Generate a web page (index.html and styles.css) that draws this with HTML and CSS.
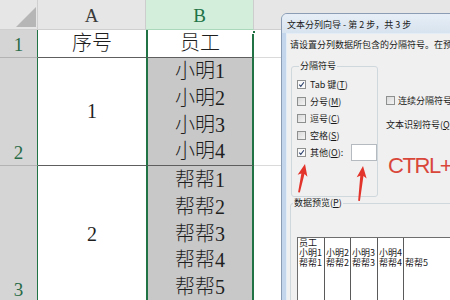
FILE: index.html
```html
<!DOCTYPE html>
<html>
<head>
<meta charset="utf-8">
<link rel="stylesheet" href="styles.css">
</head>
<body>
<div class="sheet">
  <div class="corner"><span class="tri"></span></div>
  <div class="ch">A</div>
  <div class="ch sel">B</div>
  <div class="ch rest"></div>

  <div class="rh">1</div>
  <div class="cell a">序号</div>
  <div class="cell b">员工</div>
  <div class="cell rest"></div>

  <div class="rh">2</div>
  <div class="cell a">1</div>
  <div class="cell b gray"><span>小明1</span><span>小明2</span><span>小明3</span><span>小明4</span></div>
  <div class="cell rest"></div>

  <div class="rh">3</div>
  <div class="cell a">2</div>
  <div class="cell b gray"><span>帮帮1</span><span>帮帮2</span><span>帮帮3</span><span>帮帮4</span><span>帮帮5</span></div>
  <div class="cell rest"></div>
</div>
<span class="handle"></span>

<div class="dlg">
  <div class="title">文本分列向导 - 第 2 步，共 3 步</div>
  <div class="body">
    <p class="intro">请设置分列数据所包含的分隔符号。在预览窗口内可看到分列的效果。</p>
    <div class="opts">
      <fieldset class="grp sep">
        <legend>分隔符号</legend>
        <label class="opt"><span class="cb on"><svg viewBox="0 0 9 9"><path d="M1.6 4.6 L3.6 6.8 L7.6 1.6" fill="none" stroke="#2b3f6b" stroke-width="1.4"/></svg></span>Tab 键(<u>T</u>)</label>
        <label class="opt"><span class="cb"></span>分号(<u>M</u>)</label>
        <label class="opt"><span class="cb"></span>逗号(<u>C</u>)</label>
        <label class="opt"><span class="cb"></span>空格(<u>S</u>)</label>
        <label class="opt"><span class="cb on"><svg viewBox="0 0 9 9"><path d="M1.6 4.6 L3.6 6.8 L7.6 1.6" fill="none" stroke="#2b3f6b" stroke-width="1.4"/></svg></span><span class="olab">其他(<u>O</u>):</span><span class="inp"></span></label>
      </fieldset>
      <div class="side">
        <label class="opt sm"><span class="cb"></span>连续分隔符号视为单个处理(<u>R</u>)</label>
        <div class="qual">文本识别符号(<u>Q</u>):</div>
        <div class="ctrl">CTRL+J</div>
      </div>
    </div>
    <fieldset class="grp prev">
      <legend>数据预览(<u>P</u>)</legend>
      <div class="table">
        <div class="col w1"><span>员工</span><span>小明1</span><span>帮帮1</span></div>
        <div class="col w2"><span></span><span>小明2</span><span>帮帮2</span></div>
        <div class="col w1"><span></span><span>小明3</span><span>帮帮3</span></div>
        <div class="col w2"><span></span><span>小明4</span><span>帮帮4</span></div>
        <div class="col last"><span></span><span></span><span>帮帮5</span></div>
      </div>
    </fieldset>
  </div>
</div>

<svg class="arrows" viewBox="0 0 450 300">
  <path transform="translate(305 164) rotate(12)" d="M0 0 L5 12 L1.6 10 L0.9 29 L-0.9 29 L-1.6 10 L-5 12 Z" fill="#e3342b"/>
  <path transform="translate(363 166) rotate(6.5)" d="M0 0 L5 12 L1.6 10 L0.9 35 L-0.9 35 L-1.6 10 L-5 12 Z" fill="#e3342b"/>
</svg>
</body>
</html>
```

FILE: styles.css
```css
* { box-sizing: border-box; margin: 0; padding: 0; }
html, body { width: 450px; height: 300px; overflow: hidden; background: #fff; }
body {
  position: relative;
  font-family: "Liberation Serif", "Noto Sans CJK SC", serif;
  color: #1e1e1e;
}

/* spreadsheet */
.sheet {
  display: grid;
  grid-template-columns: 38px 108px 108px 1fr;
  grid-template-rows: 30px 28px 108px 137px;
  width: 450px;
}
.corner {
  position: relative;
  background: #e6e6e6;
  border-right: 1px solid #cfcfcf;
  border-bottom: 1px solid #cfcfcf;
}
.tri {
  position: absolute;
  right: 1px;
  bottom: 2px;
  width: 0;
  height: 0;
  border-style: solid;
  border-width: 0 0 20px 20px;
  border-color: transparent transparent #b6b6b6 transparent;
}
.ch {
  display: flex;
  justify-content: center;
  align-items: flex-end;
  padding-bottom: 2px;
  background: #e6e6e6;
  border-right: 1px solid #cdcdcd;
  border-bottom: 1px solid #cfcfcf;
  font-size: 19px;
  line-height: 22px;
  color: #3a3a3a;
}
.ch.sel {
  background: #d3efdc;
  color: #217346;
  border-bottom: 1px solid #a9d8bb;
}
.ch.rest { border-right: none; }

.rh {
  display: flex;
  justify-content: center;
  align-items: flex-end;
  padding-bottom: 2px;
  background: #d5d5d5;
  border-right: 1px solid #217346;
  border-bottom: 1px solid #b3b3b3;
  font-size: 19px;
  line-height: 20px;
  color: #2a6b47;
}

.cell {
  display: flex;
  flex-direction: column;
  justify-content: center;
  align-items: center;
  font-size: 20px;
  font-weight: 300;
  line-height: 26.7px;
  border-bottom: 1px solid #5e5e5e;
}
.cell.b {
  border-left: 2px solid #217346;
  border-right: 2px solid #217346;
}
.cell.gray { background: #c8c8c8; }
.cell.rest { border-bottom: 1px solid #dadada; }

.handle {
  position: absolute;
  left: 252px;
  top: 30px;
  width: 4px;
  height: 4px;
  background: #217346;
  border: 1px solid #fff;
}

/* dialog */
.dlg {
  position: absolute;
  left: 281px;
  top: 13px;
  width: 190px;
  height: 300px;
  background: #c3d6ec;
  border: 1px solid #8a9db5;
  border-radius: 6px 0 0 0;
  font-family: "Noto Sans CJK SC", sans-serif;
  font-size: 9px;
  color: #1a1a1a;
  white-space: nowrap;
}
.title {
  height: 19px;
  display: flex;
  align-items: center;
  padding-left: 5px;
  padding-top: 1px;
  background: linear-gradient(#e7eef6, #d7e3ef);
  border-radius: 5px 0 0 0;
}
.body {
  margin-left: 4px;
  height: 280px;
  background: #f0f0f0;
  border-left: 1px solid #e4ecf5;
  border-top: 1px solid #e4ecf5;
  padding: 5px 0 0 3px;
}
.intro { line-height: 12px; }

.opts {
  display: flex;
  margin-top: 9px;
}
.grp {
  border: 1px solid #cfd8dd;
  border-radius: 3px;
}
.grp legend {
  margin-left: 2px;
  padding: 0 1px;
  line-height: 12px;
}
.sep {
  margin-left: 1px;
  width: 92px;
  height: 137px;
  padding: 4px 0 0 5px;
}
.opt {
  display: flex;
  align-items: center;
  height: 17px;
}
.opt.sm { height: 12px; }
.cb {
  display: block;
  flex: none;
  width: 9px;
  height: 9px;
  margin-right: 4px;
  border: 1px solid #8e8f8f;
  background: linear-gradient(135deg, #d9d9d9, #f4f4f4);
}
.cb.on { background: #fafafa; }
.cb svg { display: block; width: 7px; height: 7px; }
.olab { display: block; width: 41px; }
.inp {
  display: block;
  width: 26px;
  height: 17px;
  background: #fff;
  border: 1px solid #b5b9c0;
}
.side {
  margin-left: 8px;
  padding-top: 34px;
}
.side .cb { margin-right: 3px; }
.qual {
  margin-top: 13px;
  line-height: 12px;
}
.ctrl {
  margin-top: 24px;
  margin-left: 2px;
  font-family: "Liberation Sans", sans-serif;
  font-size: 22px;
  line-height: 22px;
  letter-spacing: -1.4px;
  color: #d9473b;
}

.prev {
  width: 200px;
  height: 120px;
  padding: 0;
}
.table {
  display: flex;
  margin: 28px 0 0 6px;
  height: 70px;
  background: #fff;
  border-left: 1px solid #6e6e6e;
  border-top: 1px solid #6e6e6e;
  font-size: 9px;
  line-height: 10px;
}
.col {
  display: flex;
  flex-direction: column;
  padding-left: 1px;
  border-right: 1px solid #5a5a5a;
}
.col span { height: 10px; }
.col.w1 { width: 27px; }
.col.w2 { width: 26px; }
.col.last { flex: 1; border-right: none; }

.arrows {
  position: absolute;
  left: 0;
  top: 0;
  width: 450px;
  height: 300px;
  pointer-events: none;
}
```
